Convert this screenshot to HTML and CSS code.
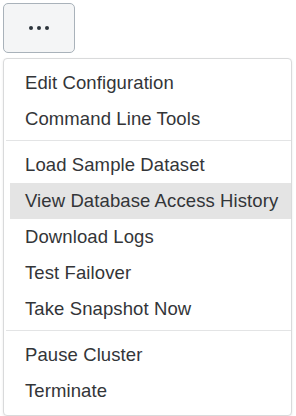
FILE: index.html
```html
<!DOCTYPE html>
<html>
<head>
<meta charset="utf-8">
<link rel="stylesheet" href="styles.css">
</head>
<body>
<div class="wrap">
  <button class="more-btn" aria-label="More actions">
    <span class="dot"></span><span class="dot"></span><span class="dot"></span>
  </button>
  <div class="menu">
    <div class="item">Edit Configuration</div>
    <div class="item">Command Line Tools</div>
    <div class="sep"></div>
    <div class="item">Load Sample Dataset</div>
    <div class="item active">View Database Access History</div>
    <div class="item">Download Logs</div>
    <div class="item">Test Failover</div>
    <div class="item">Take Snapshot Now</div>
    <div class="sep"></div>
    <div class="item">Pause Cluster</div>
    <div class="item">Terminate</div>
  </div>
</div>
</body>
</html>
```

FILE: styles.css
```css
html, body {
  margin: 0;
  padding: 0;
  background: #ffffff;
}
body {
  font-family: "Liberation Sans", Arial, sans-serif;
  color: #333538;
}
.wrap {
  padding: 3px 4px 0 3px;
  display: flex;
  flex-direction: column;
  align-items: flex-start;
  gap: 5px;
}
.more-btn {
  width: 72px;
  height: 50px;
  box-sizing: border-box;
  border: 1.5px solid #a9b2ba;
  border-radius: 5px;
  background: #f4f5f6;
  display: flex;
  align-items: center;
  justify-content: center;
  gap: 4px;
  padding: 0;
}
.dot {
  width: 4px;
  height: 4px;
  border-radius: 50%;
  background: #2c343c;
}
.menu {
  width: 289px;
  box-sizing: border-box;
  border: 1px solid #d9dadb;
  border-radius: 4px;
  box-shadow: 0 1px 3px rgba(0,0,0,0.08);
  padding: 6px 0 6px 0;
  background: #fff;
}
.item {
  height: 36px;
  margin-left: 6px;
  padding-left: 15px;
  display: flex;
  align-items: center;
  font-size: 18.5px;
  letter-spacing: 0.1px;
  color: #333538;
  white-space: nowrap;
}
.item.active {
  background: #e4e4e4;
}
.sep {
  height: 1px;
  background: #e3e4e5;
  margin: 3px 0 6px 2px;
}
```
